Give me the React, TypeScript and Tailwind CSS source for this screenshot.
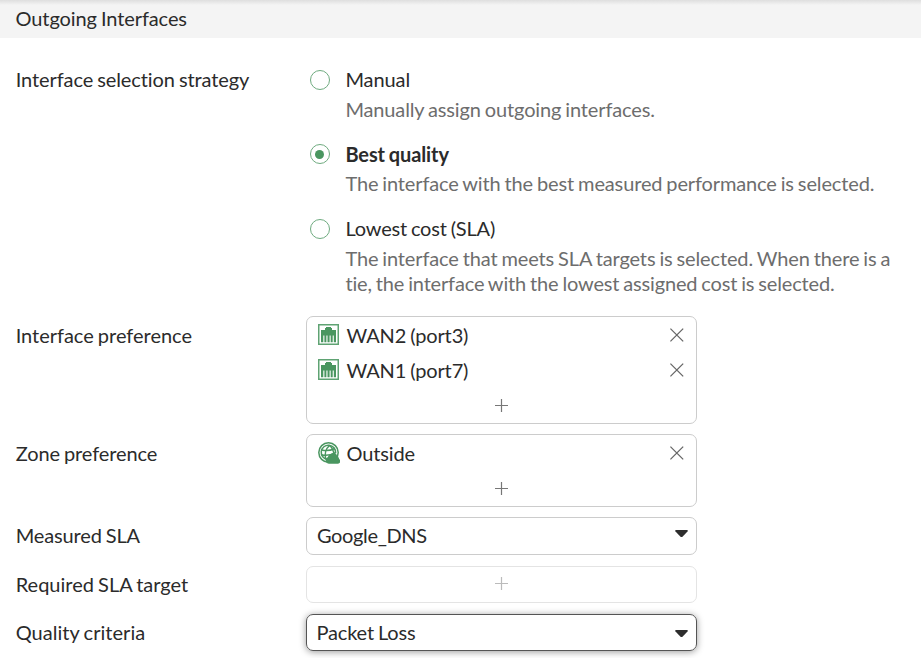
import React from "react";

const FONT = "font-['Lato',sans-serif]";

function Close() {
  return (
    <svg width="14" height="14" viewBox="0 0 14 14" className="shrink-0" stroke="#666" strokeWidth="1.3" fill="none">
      <path d="M.4.6 13.2 13.4M13.2.6.4 13.4" />
    </svg>
  );
}

function Plus({ color = "#777" }: { color?: string }) {
  return (
    <svg width="13" height="13" viewBox="0 0 13 13" stroke={color} strokeWidth="1.2" fill="none">
      <path d="M6.5 0v13M0 6.5h13" />
    </svg>
  );
}

function PortIcon() {
  return (
    <svg width="21" height="21" viewBox="0 0 21 21" className="mr-px shrink-0">
      <rect x=".75" y=".75" width="19.5" height="19.5" fill="#fff" stroke="#5fa373" strokeWidth="1.5" />
      <path
        fill="#4a9660"
        d="M3 6h4V4h1V3h5v1h1v2h4v12.300h-2.200V11.500h-1.100v6.800h-2V11.500h-1.100v6.800H9.500V11.500H8.400v6.800h-2V11.500H5.300v6.800H3z"
      />
    </svg>
  );
}

function ZoneIcon() {
  return (
    <svg width="22" height="22" viewBox="0 0 22 22" className="shrink-0">
      <g fill="none" stroke="#4a9660">
        <circle cx="10.500" cy="10.500" r="9.700" strokeWidth="1.500" />
        <path d="M4 8c4 1.200 9 .3 13-1.500M3.500 12.800c5 1.200 10 .3 14.500-2.300M11.500 3.500c-3.500 3-5 8.500-3.800 14M11.500 3.500c2.500 2 4 4.800 4.300 8.500" strokeWidth="1.500" />
        <path d="M9.500 17.500A7.200 7.200 0 1 1 17.600 11" strokeWidth="1.500" />
      </g>
      <path
        fill="#4a9660"
        d="M10.800 21.800a3.600 3.600 0 0 1-.9-6.900 2.700 2.700 0 0 1 2.500-2.400 4.100 4.100 0 0 1 7 1.900 2.700 2.700 0 0 1 1.700 2.600A2.600 2.600 0 0 1 20 21.800z"
      />
    </svg>
  );
}

function Caret() {
  return (
    <svg width="13" height="8" viewBox="0 0 13 8" className="shrink-0">
      <path d="M1 0h11q1.300.3.5 1.500L7.500 6.700q-1 .8-2 0L.5 1.500Q-.3.300 1 0z" fill="#2d2d2d" />
    </svg>
  );
}

function Radio({ title, checked, last, children }: { title: string; checked?: boolean; last?: boolean; children: React.ReactNode }) {
  return (
    <div className={`flex ${last ? "" : checked ? "h-[75px]" : "h-[74px]"}`}>
      <span className="mt-[3px] mr-[15.4px] ml-[4px] flex size-5 shrink-0 items-center justify-center rounded-full border border-[#6fab80]">
        {checked && <span className="size-[9px] rounded-full bg-[#4a9660]" />}
      </span>
      <div>
        <div className={`h-[30px] leading-[25px] ${checked ? "pt-px font-bold" : last ? "tracking-[-0.18px]" : ""}`}>{title}</div>
        <div className="leading-[25px] tracking-[-0.135px] text-[#6d6d6d]">{children}</div>
      </div>
    </div>
  );
}

function Row({ label, children, className = "", labelClass = "pt-[6px] tracking-[-0.04px]" }: { label: string; children: React.ReactNode; className?: string; labelClass?: string }) {
  return (
    <div className={`flex ${className}`}>
      <div className={`w-[290.3px] shrink-0 leading-[25px] ${labelClass}`}>{label}</div>
      {children}
    </div>
  );
}

function Item({ icon, text }: { icon: React.ReactNode; text: string }) {
  return (
    <div className="flex h-[35px] items-center pr-3 pl-[11px]">
      {icon}
      <span className="ml-[6.5px] flex-1 pt-[2px] leading-[25px] tracking-[-0.14px]">{text}</span>
      <Close />
    </div>
  );
}

export default function App() {
  return (
    <div className={`${FONT} h-[658px] w-[921px] overflow-hidden bg-white text-[20px] tracking-[-0.09px] text-[#2b2b2b] [word-spacing:-1px]`}>
      <header className="h-[38px] bg-[linear-gradient(#dedede,#f4f4f4_5px)] pl-[15.5px] leading-[36px]">Outgoing Interfaces</header>
      <main className="pt-[29px] pl-[15.7px]">
        <div className="flex h-[249px]">
          <div className="w-[290.3px] shrink-0 leading-[25px]">Interface selection strategy</div>
          <div className="w-[600px]">
            <Radio title="Manual">Manually assign outgoing interfaces.</Radio>
            <Radio title="Best quality" checked>The interface with the best measured performance is selected.</Radio>
            <Radio title="Lowest cost (SLA)" last>
              The interface that meets SLA targets is selected. When there is a<br />
              <span className="tracking-[-0.16px]">tie, the interface with the lowest assigned cost is selected.</span>
            </Radio>
          </div>
        </div>
        <Row label="Interface preference" className="mb-[10px]" labelClass="pt-[7px] tracking-[-0.02px]">
          <div className="h-[108px] w-[391px] rounded-[7px] border border-[#ccc]">
            <Item icon={<PortIcon />} text="WAN2 (port3)" />
            <Item icon={<PortIcon />} text="WAN1 (port7)" />
            <div className="flex h-[36px] items-center justify-center"><Plus /></div>
          </div>
        </Row>
        <Row label="Zone preference" className="mb-[10px]" labelClass="pt-[7px] tracking-[-0.1px]">
          <div className="h-[73px] w-[391px] rounded-[7px] border border-[#ccc]">
            <Item icon={<ZoneIcon />} text="Outside" />
            <div className="flex h-[37px] items-center justify-center"><Plus /></div>
          </div>
        </Row>
        <Row label="Measured SLA" className="mb-[11px]" labelClass="pt-[6px] tracking-[-0.14px]">
          <div className="flex h-[38px] w-[391px] items-center rounded-[7px] border border-[#ccc] pr-2 pl-[10px]">
            <span className="flex-1 pb-[2px] tracking-[-0.35px]">Google_DNS</span>
            <span className="pb-1"><Caret /></span>
          </div>
        </Row>
        <Row label="Required SLA target" className="mb-[11px]" labelClass="pt-[6px] tracking-normal">
          <div className="flex h-[37px] w-[391px] items-center justify-center rounded-[7px] border border-[#e4e4e4] pb-[2px]">
            <Plus color="#bbb" />
          </div>
        </Row>
        <Row label="Quality criteria" labelClass="pt-[6px] tracking-[0.04px]">
          <div className="flex h-[37px] w-[391px] items-center rounded-[7px] border border-[#555] pr-2 pl-[9.5px] shadow-[0_1px_7px_rgba(0,0,0,0.4)]">
            <span className="flex-1 pb-[2px] tracking-[-0.16px]">Packet Loss</span>
            <span className="pt-[2px]"><Caret /></span>
          </div>
        </Row>
      </main>
    </div>
  );
}
